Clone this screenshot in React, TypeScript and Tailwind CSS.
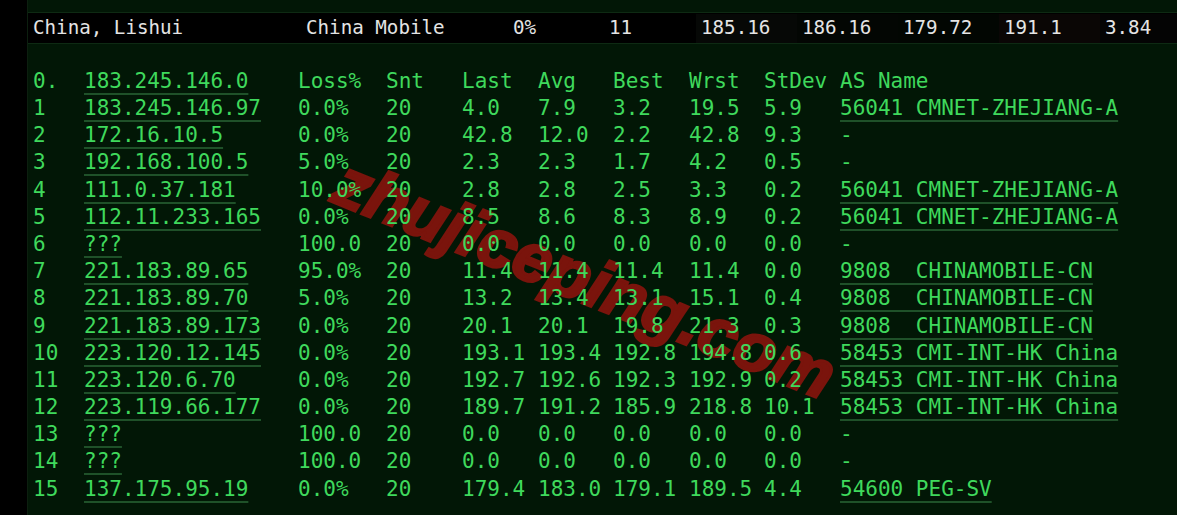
import React from "react";

const mono = "font-['DejaVu_Sans_Mono','Liberation_Mono',monospace]";

type Hop = {
  n: string;
  host: string;
  loss: string;
  snt: string;
  last: string;
  avg: string;
  best: string;
  wrst: string;
  stdev: string;
  as: string;
};

const hops: Hop[] = [
  { n: "1", host: "183.245.146.97", loss: "0.0%", snt: "20", last: "4.0", avg: "7.9", best: "3.2", wrst: "19.5", stdev: "5.9", as: "56041 CMNET-ZHEJIANG-A" },
  { n: "2", host: "172.16.10.5", loss: "0.0%", snt: "20", last: "42.8", avg: "12.0", best: "2.2", wrst: "42.8", stdev: "9.3", as: "-" },
  { n: "3", host: "192.168.100.5", loss: "5.0%", snt: "20", last: "2.3", avg: "2.3", best: "1.7", wrst: "4.2", stdev: "0.5", as: "-" },
  { n: "4", host: "111.0.37.181", loss: "10.0%", snt: "20", last: "2.8", avg: "2.8", best: "2.5", wrst: "3.3", stdev: "0.2", as: "56041 CMNET-ZHEJIANG-A" },
  { n: "5", host: "112.11.233.165", loss: "0.0%", snt: "20", last: "8.5", avg: "8.6", best: "8.3", wrst: "8.9", stdev: "0.2", as: "56041 CMNET-ZHEJIANG-A" },
  { n: "6", host: "???", loss: "100.0", snt: "20", last: "0.0", avg: "0.0", best: "0.0", wrst: "0.0", stdev: "0.0", as: "-" },
  { n: "7", host: "221.183.89.65", loss: "95.0%", snt: "20", last: "11.4", avg: "11.4", best: "11.4", wrst: "11.4", stdev: "0.0", as: "9808  CHINAMOBILE-CN" },
  { n: "8", host: "221.183.89.70", loss: "5.0%", snt: "20", last: "13.2", avg: "13.4", best: "13.1", wrst: "15.1", stdev: "0.4", as: "9808  CHINAMOBILE-CN" },
  { n: "9", host: "221.183.89.173", loss: "0.0%", snt: "20", last: "20.1", avg: "20.1", best: "19.8", wrst: "21.3", stdev: "0.3", as: "9808  CHINAMOBILE-CN" },
  { n: "10", host: "223.120.12.145", loss: "0.0%", snt: "20", last: "193.1", avg: "193.4", best: "192.8", wrst: "194.8", stdev: "0.6", as: "58453 CMI-INT-HK China" },
  { n: "11", host: "223.120.6.70", loss: "0.0%", snt: "20", last: "192.7", avg: "192.6", best: "192.3", wrst: "192.9", stdev: "0.2", as: "58453 CMI-INT-HK China" },
  { n: "12", host: "223.119.66.177", loss: "0.0%", snt: "20", last: "189.7", avg: "191.2", best: "185.9", wrst: "218.8", stdev: "10.1", as: "58453 CMI-INT-HK China" },
  { n: "13", host: "???", loss: "100.0", snt: "20", last: "0.0", avg: "0.0", best: "0.0", wrst: "0.0", stdev: "0.0", as: "-" },
  { n: "14", host: "???", loss: "100.0", snt: "20", last: "0.0", avg: "0.0", best: "0.0", wrst: "0.0", stdev: "0.0", as: "-" },
  { n: "15", host: "137.175.95.19", loss: "0.0%", snt: "20", last: "179.4", avg: "183.0", best: "179.1", wrst: "189.5", stdev: "4.4", as: "54600 PEG-SV" },
];

const link = "underline decoration-[#1f5129] decoration-2 underline-offset-[5px]";

function Row({ h, header }: { h: Hop; header?: boolean }) {
  return (
    <div className="flex h-[27.2px] items-center whitespace-pre">
      <span className="w-[51px] shrink-0">{h.n}</span>
      <span className="w-[214px] shrink-0">
        <span className={link}>{h.host}</span>
      </span>
      <span className="w-[88px] shrink-0">{h.loss}</span>
      <span className="w-[76px] shrink-0">{h.snt}</span>
      <span className="w-[76px] shrink-0">{h.last}</span>
      <span className="w-[75px] shrink-0">{h.avg}</span>
      <span className="w-[76px] shrink-0">{h.best}</span>
      <span className="w-[75px] shrink-0">{h.wrst}</span>
      <span className="w-[76px] shrink-0">{h.stdev}</span>
      <span>{header || h.as === "-" ? h.as : <span className={link}>{h.as}</span>}</span>
    </div>
  );
}

export default function App() {
  const header: Hop = {
    n: "0.", host: "183.245.146.0", loss: "Loss%", snt: "Snt", last: "Last", avg: "Avg",
    best: "Best", wrst: "Wrst", stdev: "StDev", as: "AS Name",
  };

  return (
    <div className={`flex h-[515px] w-[1177px] overflow-hidden bg-black ${mono}`}>
      <div className="w-[28px] shrink-0 border-r border-[#0c1f0f] bg-black" />
      <div className="relative flex-1 overflow-hidden bg-[#021706]">
        {/* summary bar */}
        <div className="mt-[12px] flex h-[32px] items-center border-y border-[#0e2a13] bg-black pt-[1px] text-[19.2px] text-[#e4e4e4]">
          <div className="w-[273px] shrink-0 pl-[5px]">China, Lishui</div>
          <div className="w-[207px] shrink-0 pl-[5px]">China Mobile</div>
          <div className="w-[96px] shrink-0 pl-[5px]">0%</div>
          <div className="w-[92px] shrink-0 pl-[5px]">11</div>
          <div className="flex h-full w-[101px] shrink-0 items-center bg-[#060806] pl-[5px]">185.16</div>
          <div className="flex h-full w-[101px] shrink-0 items-center bg-[#030603] pl-[5px]">186.16</div>
          <div className="flex h-full w-[101px] shrink-0 items-center bg-[#020602] pl-[5px]">179.72</div>
          <div className="flex h-full w-[101px] shrink-0 items-center bg-[#0a0605] pl-[5px]">191.1</div>
          <div className="flex h-full flex-1 items-center bg-[#040404] pl-[5px]">3.84</div>
        </div>

        {/* watermark */}
        <div className="pointer-events-none absolute left-[272px] top-[244px] w-[570px] rotate-[22deg] text-center font-['Liberation_Sans',sans-serif] text-[68px] font-bold italic leading-none text-[#7a140c] [-webkit-text-stroke:3px_#7a140c]">
          zhujiceping.com
        </div>

        {/* hop table */}
        <div className="relative pl-[5px] pt-[24px] text-[21px] text-[#3fd95c]">
          <Row h={header} header />
          {hops.map((h) => (
            <Row key={h.n} h={h} />
          ))}
        </div>
      </div>
    </div>
  );
}
